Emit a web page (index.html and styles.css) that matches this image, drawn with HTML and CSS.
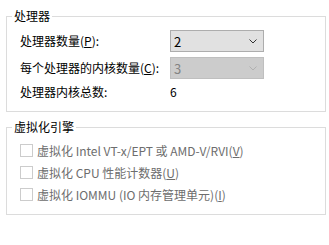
FILE: index.html
```html
<!DOCTYPE html>
<html lang="zh-CN">
<head>
  <meta charset="UTF-8">
  <title>处理器</title>
  <link rel="stylesheet" href="styles.css">
</head>
<body>
  <div class="panel">
    <fieldset class="group">
      <legend>处理器</legend>
      <div class="cpu-grid">
        <label class="label">处理器数量(<u>P</u>):</label>
        <div class="combo">
          <span>2</span>
          <svg class="chev" width="8" height="5" viewBox="0 0 8 5"><path d="M0.5 0.5 L4 4 L7.5 0.5" fill="none" stroke="#333" stroke-width="1"/></svg>
        </div>

        <label class="label">每个处理器的内核数量(<u>C</u>):</label>
        <div class="combo disabled">
          <span>3</span>
          <svg class="chev" width="8" height="5" viewBox="0 0 8 5"><path d="M0.5 0.5 L4 4 L7.5 0.5" fill="none" stroke="#b0b0b0" stroke-width="1"/></svg>
        </div>

        <span class="label">处理器内核总数:</span>
        <span class="value">6</span>
      </div>
    </fieldset>

    <fieldset class="group virt">
      <legend>虚拟化引擎</legend>
      <div class="check-row"><span class="box"></span>虚拟化 Intel VT-x/EPT 或 AMD-V/RVI(<u>V</u>)</div>
      <div class="check-row"><span class="box"></span>虚拟化 CPU 性能计数器(<u>U</u>)</div>
      <div class="check-row"><span class="box"></span>虚拟化 IOMMU (IO 内存管理单元)(<u>I</u>)</div>
    </fieldset>
  </div>
</body>
</html>
```

FILE: styles.css
```css
body {
  margin: 0;
  background: #ffffff;
  font-family: "Noto Sans CJK SC", "Noto Sans", sans-serif;
  font-size: 12px;
  color: #000;
}

.panel {
  padding: 8px 3px 0 6px;
}

.group {
  margin: 0;
  border: 1px solid #dcdcdc;
  padding: 6px 0 11px 13px;
  min-width: 0;
}

/* legend sits close to the left corner like the win32 groupbox */
.group legend {
  margin-left: -8px;
  padding: 0 2px;
  line-height: 16px;
  height: 16px;
}

.cpu-grid {
  display: grid;
  grid-template-columns: 150px 94px;
  grid-template-rows: 22px 22px 16px;
  row-gap: 5px;
  align-items: center;
}

.cpu-grid .label {
  line-height: 16px;
}

.combo {
  box-sizing: border-box;
  height: 22px;
  border: 1px solid #adadad;
  background: #e1e1e1;
  display: flex;
  align-items: center;
  justify-content: space-between;
  padding: 0 6px 0 3px;
  font-size: 13px;
}

.combo.disabled {
  border-color: #bfbfbf;
  background: #cccccc;
  color: #838383;
}

.value {
  line-height: 16px;
}

.virt {
  margin-top: 7px;
  padding: 4px 0 9px 13px;
  color: #6d6d6d;
}

.virt legend {
  color: #000;
}

.check-row {
  height: 22px;
  display: flex;
  align-items: center;
}

.box {
  box-sizing: border-box;
  width: 13px;
  height: 13px;
  border: 1px solid #cccccc;
  background: #fff;
  margin-right: 4px;
}
```
